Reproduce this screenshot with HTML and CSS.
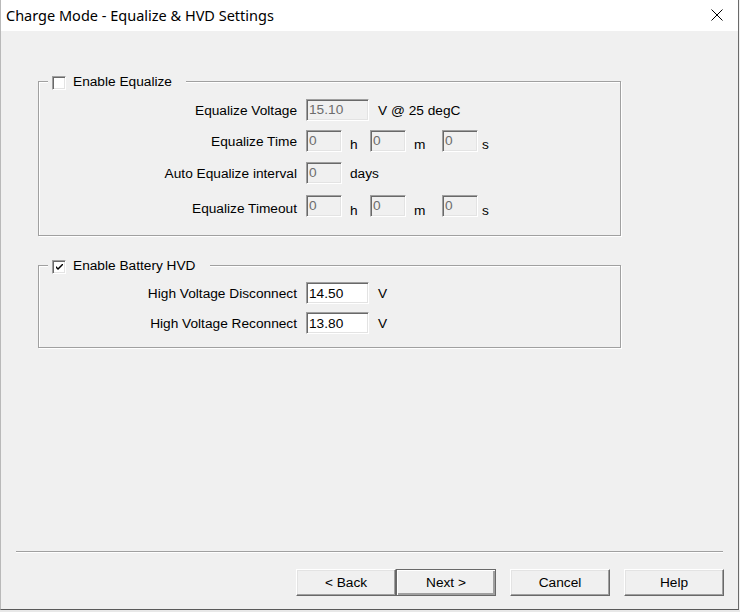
FILE: index.html
```html
<!DOCTYPE html>
<html>
<head>
<meta charset="utf-8">
<title>Charge Mode - Equalize &amp; HVD Settings</title>
<link rel="stylesheet" href="styles.css">
</head>
<body>
<div class="window">
  <div class="titlebar">
    <span class="title">Charge Mode - Equalize &amp; HVD Settings</span>
    <svg class="close" width="12" height="12" viewBox="0 0 12 12"><path d="M0.5 0.5 L11.5 11.5 M11.5 0.5 L0.5 11.5" stroke="#000" stroke-width="1" fill="none"/></svg>
  </div>
  <div class="client">
    <fieldset class="group group-eq">
      <legend class="legend"><span class="checkbox"></span><span class="legend-text">Enable Equalize</span></legend>
      <div class="row row-1">
        <span class="label">Equalize Voltage</span>
        <input class="field wide disabled" type="text" value="15.10" disabled>
        <span class="unit u-v">V @ 25 degC</span>
      </div>
      <div class="row row-2">
        <span class="label">Equalize Time</span>
        <input class="field narrow disabled" type="text" value="0" disabled>
        <span class="unit low u-h">h</span>
        <input class="field narrow disabled" type="text" value="0" disabled>
        <span class="unit low u-m">m</span>
        <input class="field narrow disabled" type="text" value="0" disabled>
        <span class="unit low u-s">s</span>
      </div>
      <div class="row row-3">
        <span class="label">Auto Equalize interval</span>
        <input class="field narrow disabled" type="text" value="0" disabled>
        <span class="unit u-d">days</span>
      </div>
      <div class="row row-4">
        <span class="label">Equalize Timeout</span>
        <input class="field narrow disabled" type="text" value="0" disabled>
        <span class="unit low u-h">h</span>
        <input class="field narrow disabled" type="text" value="0" disabled>
        <span class="unit low u-m">m</span>
        <input class="field narrow disabled" type="text" value="0" disabled>
        <span class="unit low u-s">s</span>
      </div>
    </fieldset>

    <fieldset class="group group-hvd">
      <legend class="legend"><span class="checkbox checked"><svg width="7" height="7" viewBox="0 0 7 7"><path d="M0 2 L0 4 L2 6 L7 1 L7 -1 L2 4 Z" fill="#000"/></svg></span><span class="legend-text">Enable Battery HVD</span></legend>
      <div class="row row-h1">
        <span class="label">High Voltage Disconnect</span>
        <input class="field wide" type="text" value="14.50">
        <span class="unit u-v">V</span>
      </div>
      <div class="row row-h2">
        <span class="label">High Voltage Reconnect</span>
        <input class="field wide" type="text" value="13.80">
        <span class="unit u-v">V</span>
      </div>
    </fieldset>

    <div class="separator"></div>
    <div class="buttons">
      <button class="btn">&lt; Back</button>
      <button class="btn default">Next &gt;</button>
      <button class="btn spaced">Cancel</button>
      <button class="btn spaced">Help</button>
    </div>
  </div>
</div>
<div class="under"></div>
</body>
</html>
```

FILE: styles.css
```css
html, body {
  margin: 0;
  padding: 0;
  background: #f0f0f0;
}
body {
  width: 740px;
  height: 612px;
  overflow: hidden;
  font-family: "Liberation Sans", Arial, sans-serif;
  font-size: 13.7px;
  color: #000;
}
.window {
  box-sizing: border-box;
  width: 739px;
  height: 610px;
  border-left: 1px solid #b9b9b9;
  border-right: 1px solid #6a6a6a;
  border-bottom: 1px solid #5a5a5a;
  display: flex;
  flex-direction: column;
  background: #f0f0f0;
}
.titlebar {
  height: 31px;
  flex: none;
  background: #fff;
  display: flex;
  align-items: center;
  padding-left: 5px;
  padding-right: 15px;
}
.title {
  font-family: "Noto Sans", "Open Sans", sans-serif;
  font-size: 14.5px;
  color: #000;
  flex: 1;
  padding-bottom: 1px;
}
.close {
  display: block;
  margin-bottom: 2px;
}
.client {
  flex: 1;
  display: flex;
  flex-direction: column;
}
.group {
  box-sizing: border-box;
  width: 583px;
  margin: 0 0 0 37px;
  padding: 0;
  border: 1px solid #a0a0a0;
  box-shadow: 1px 1px 0 #fff, inset 1px 1px 0 #fff;
  min-inline-size: 0;
}
.group-eq {
  margin-top: 41px;
  padding-top: 9px;
  padding-bottom: 18px;
}
.group-hvd {
  margin-top: 20px;
  padding-top: 8px;
  padding-bottom: 13px;
}
.legend {
  margin-left: 9px;
  padding: 0 14px 0 4px;
  height: 18px;
  box-sizing: border-box;
  display: flex;
  align-items: flex-end;
  gap: 7px;
  background: #f0f0f0;
}
.legend-text {
  line-height: 14px;
  padding-bottom: 1px;
}
.checkbox {
  box-sizing: border-box;
  width: 14px;
  height: 14px;
  background: #fff;
  border-top: 1px solid #a0a0a0;
  border-left: 1px solid #a0a0a0;
  border-right: 1px solid #fff;
  border-bottom: 1px solid #fff;
  box-shadow: inset 1px 1px 0 #696969, inset -1px -1px 0 #e3e3e3;
  display: flex;
  align-items: center;
  justify-content: center;
}
.checkbox svg {
  display: block;
  margin-top: 1px;
}
.row {
  display: flex;
  align-items: center;
  height: 22px;
}
.row-2 { margin-top: 9px; }
.row-3 { margin-top: 10px; }
.row-4 { margin-top: 11px; }
.row-4 .label { padding-top: 4px; }
.row-h2 { margin-top: 8px; }
.label {
  box-sizing: border-box;
  width: 258px;
  text-align: right;
  margin-right: 9px;
  white-space: nowrap;
}
.field {
  box-sizing: border-box;
  height: 22px;
  margin: 0;
  padding: 0 2px;
  font-family: "Liberation Sans", Arial, sans-serif;
  font-size: 13.7px;
  color: #000;
  background: #fff;
  border-top: 1px solid #a0a0a0;
  border-left: 1px solid #a0a0a0;
  border-right: 1px solid #fff;
  border-bottom: 1px solid #fff;
  box-shadow: inset 1px 1px 0 #696969, inset -1px -1px 0 #e3e3e3;
  outline: none;
  appearance: none;
}
.field.disabled {
  background: #f0f0f0;
  color: #6d6d6d;
  -webkit-text-fill-color: #6d6d6d;
  opacity: 1;
  padding-bottom: 2px;
}
.wide { width: 63px; }
.narrow { width: 36px; }
.unit {
  white-space: nowrap;
}
.unit.low { padding-top: 6px; }
.row-4 .unit.low { padding-top: 9px; }
.u-v { margin-left: 9px; }
.u-d { margin-left: 8px; }
.u-h { margin-left: 8px; width: 20px; }
.u-m { margin-left: 8px; width: 28px; }
.u-s { margin-left: 4px; }
.separator {
  margin: auto 15px 0 15px;
  height: 1px;
  background: #a0a0a0;
  border-bottom: 1px solid #fff;
}
.buttons {
  display: flex;
  justify-content: flex-end;
  padding-right: 14px;
  margin-top: 16px;
  margin-bottom: 13px;
}
.btn {
  box-sizing: border-box;
  width: 100px;
  height: 27px;
  margin: 0;
  padding: 0 0 1px 0;
  font-family: "Liberation Sans", Arial, sans-serif;
  font-size: 13.7px;
  color: #000;
  background: #f0f0f0;
  border-top: 1px solid #fff;
  border-left: 1px solid #fff;
  border-right: 1px solid #696969;
  border-bottom: 1px solid #696969;
  box-shadow: inset -1px -1px 0 #a0a0a0, inset 1px 1px 0 #e3e3e3;
}
.btn.default {
  border: 1px solid #696969;
  box-shadow: inset 1px 1px 0 #fff, inset -1px -1px 0 #a0a0a0, inset -2px -2px 0 #a0a0a0;
}
.btn.spaced { margin-left: 14px; }
.under {
  height: 2px;
  background: #e8e8e8;
}
```
